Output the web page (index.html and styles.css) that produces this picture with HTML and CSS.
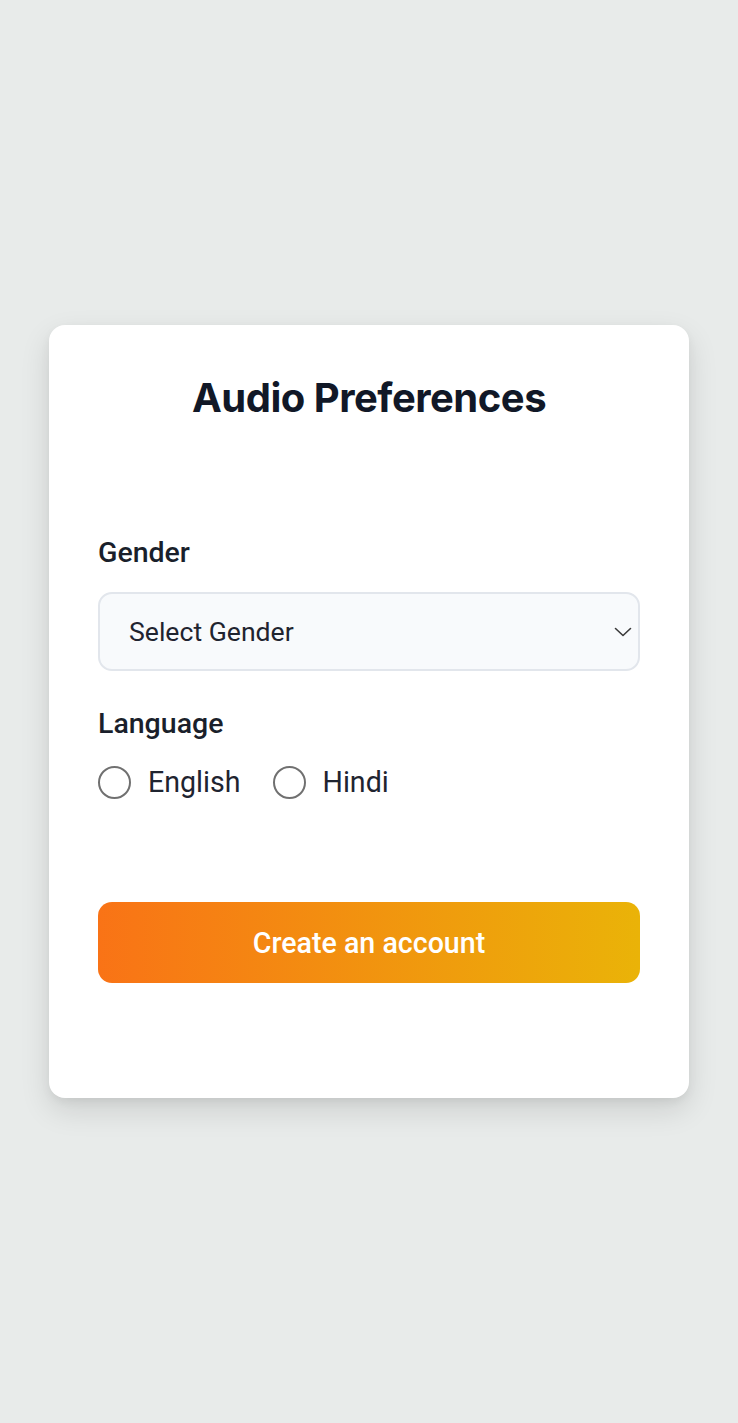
FILE: index.html
```html
<!DOCTYPE html>
<html lang="en">
<head>
<meta charset="utf-8">
<title>Audio Preferences</title>
<link rel="stylesheet" href="styles.css">
</head>
<body>
<main class="card">
  <h1 class="title">Audio Preferences</h1>
  <form class="form">
    <label class="label" for="gender">Gender</label>
    <div class="select-wrap">
      <select id="gender" class="select">
        <option>Select Gender</option>
        <option>Male</option>
        <option>Female</option>
      </select>
      <svg class="chevron" width="18" height="10" viewBox="0 0 18 10" aria-hidden="true">
        <path d="M1.5 1.5 L9 8.5 L16.5 1.5" fill="none" stroke="#3a3a3a" stroke-width="1.6" stroke-linecap="round" stroke-linejoin="round"/>
      </svg>
    </div>
    <div class="label label-lang">Language</div>
    <div class="radios">
      <label class="radio"><input type="radio" name="lang"><span>English</span></label>
      <label class="radio"><input type="radio" name="lang"><span>Hindi</span></label>
    </div>
    <button type="button" class="btn">Create an account</button>
  </form>
</main>
</body>
</html>
```
FILE: styles.css
```css
* { box-sizing: border-box; }
html, body { margin: 0; padding: 0; }
body {
  background: #e8ebea;
  min-height: 100vh;
  display: flex;
  align-items: center;
  justify-content: center;
  font-family: Roboto, "Liberation Sans", sans-serif;
}
.card {
  width: 640px;
  background: #ffffff;
  border-radius: 16px;
  padding: 49px 49px 115px;
  box-shadow: 0 12px 30px rgba(0, 0, 0, 0.12), 0 4px 10px rgba(0, 0, 0, 0.05);
}
.title {
  margin: 0;
  font-family: Inter, "Liberation Sans", sans-serif;
  font-weight: 700;
  font-size: 40px;
  line-height: 48px;
  letter-spacing: -0.5px;
  text-align: center;
  color: #111827;
}
.form {
  display: flex;
  flex-direction: column;
  margin-top: 113px;
}
.label {
  font-size: 28.5px;
  line-height: 36px;
  font-weight: 500;
  color: #1a1f2b;
}
.label-lang { margin-top: 35px; }
.select-wrap {
  position: relative;
  margin-top: 21px;
}
.select {
  appearance: none;
  -webkit-appearance: none;
  width: 100%;
  height: 79px;
  border: 2px solid #e2e6ec;
  border-radius: 14px;
  background: #f8fafc;
  padding: 0 60px 0 29px;
  font-family: Roboto, "Liberation Sans", sans-serif;
  font-size: 26.6px;
  color: #1f2430;
  outline: none;
}
.chevron {
  position: absolute;
  right: 8px;
  top: 35px;
  pointer-events: none;
}
.radios {
  display: flex;
  gap: 32px;
  margin-top: 22px;
  height: 36px;
  align-items: center;
}
.radio {
  display: flex;
  align-items: center;
  gap: 17px;
  font-size: 28.6px;
  color: #1f2430;
}
.radio input {
  appearance: none;
  -webkit-appearance: none;
  margin: 0;
  width: 33px;
  height: 33px;
  border: 2px solid #707070;
  border-radius: 50%;
  background: #fff;
}
.btn {
  margin-top: 102px;
  height: 81px;
  border: none;
  border-radius: 14px;
  background: linear-gradient(90deg, #f97316 0%, #eab308 100%);
  color: #fff;
  font-family: Roboto, "Liberation Sans", sans-serif;
  font-weight: 500;
  font-size: 28.6px;
}
```
